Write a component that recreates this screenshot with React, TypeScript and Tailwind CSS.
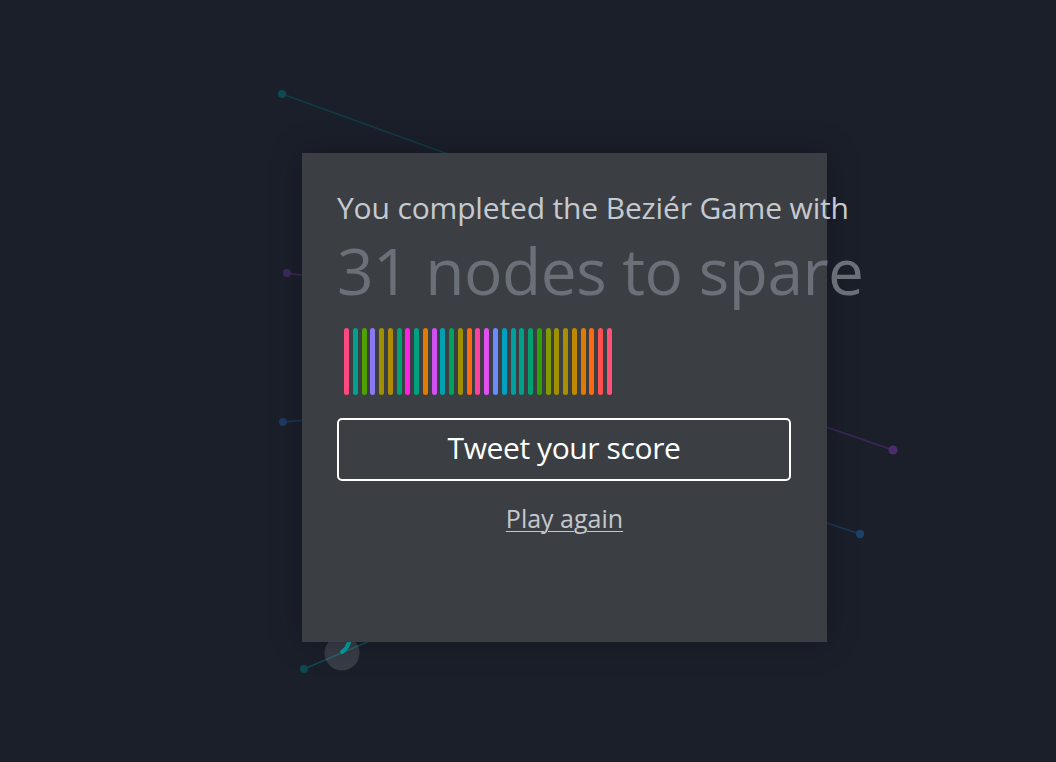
import React from "react";

const colors = [
  "#ff4a80", "#00a090", "#50a000", "#8a7af0", "#a09000", "#b08a00", "#00a070",
  "#ff20e0", "#00a080", "#e07a00", "#d050f0", "#00a0b0", "#00a060", "#a09000",
  "#ff6a10", "#ff40a0", "#e050f0", "#6a8aff", "#00a0c0", "#00a0a0", "#00a088",
  "#00a070", "#30a000", "#809a00", "#a09000", "#a89000", "#c08800", "#e07a00",
  "#ff6a10", "#ff5050", "#ff5078",
];

export default function App() {
  return (
    <div className="relative w-[1056px] h-[762px] overflow-hidden bg-[#1b1f2a]" style={{ fontFamily: '"Open Sans", "Noto Sans", sans-serif' }}>
      <svg className="absolute inset-0" width="1056" height="762">
        <line x1="282" y1="94" x2="470" y2="162" stroke="#103c46" strokeWidth="1.6" />
        <circle cx="282" cy="94" r="4" fill="#0f4a52" />
        <line x1="287" y1="273" x2="320" y2="278" stroke="#3a2a55" strokeWidth="1.6" />
        <circle cx="287" cy="273" r="4" fill="#3e2a5c" />
        <line x1="283" y1="422" x2="320" y2="419" stroke="#1d3658" strokeWidth="1.6" />
        <circle cx="283" cy="422" r="4" fill="#1e3a62" />
        <line x1="800" y1="418" x2="893" y2="450" stroke="#3b2858" strokeWidth="1.6" />
        <circle cx="893" cy="450" r="4.5" fill="#4a2d6a" />
        <line x1="800" y1="514" x2="860" y2="534" stroke="#1d3658" strokeWidth="1.6" />
        <circle cx="860" cy="534" r="4.2" fill="#1f4066" />
        <line x1="304" y1="669" x2="400" y2="628" stroke="#0e4a52" strokeWidth="1.6" />
        <circle cx="304" cy="669" r="4" fill="#0f4a52" />
        <circle cx="342" cy="653" r="17.5" fill="#ffffff" fillOpacity="0.13" />
        <path d="M350 639 Q348 648 342 652" stroke="#00a0a0" strokeWidth="4" fill="none" strokeLinecap="round" />
      </svg>
      <div className="absolute left-[302px] top-[153px] w-[525px] h-[489px] bg-[#3b3f44] shadow-[0_0_30px_rgba(0,0,0,0.25)] px-[35px] pt-[37px]">
        <div className="text-[30px] leading-[36px] text-[#c6cacf] whitespace-nowrap tracking-[-0.15px]">
          You completed the Beziér Game with
        </div>
        <div className="mt-[9px] text-[64px] leading-[72px] text-[#6b7078] whitespace-nowrap tracking-[-0.5px]">
          31 nodes to spare
        </div>
        <div className="mt-[21px] ml-[7px] flex gap-[3.77px] h-[67px]">
          {colors.map((c, i) => (
            <div key={i} className="w-[5px] h-full rounded-full" style={{ backgroundColor: c }} />
          ))}
        </div>
        <button className="mt-[23px] w-[454px] h-[63px] border-[2.5px] border-white rounded-[5px] flex items-center justify-center text-white text-[30px] leading-[40px] tracking-[-0.4px] pb-[3px]">
          Tweet your score
        </button>
        <div className="mt-[21px] text-center">
          <span className="text-[25px] leading-[32px] text-[#c4c8cc] underline underline-offset-[3px] decoration-1">
            Play again
          </span>
        </div>
      </div>
    </div>
  );
}
